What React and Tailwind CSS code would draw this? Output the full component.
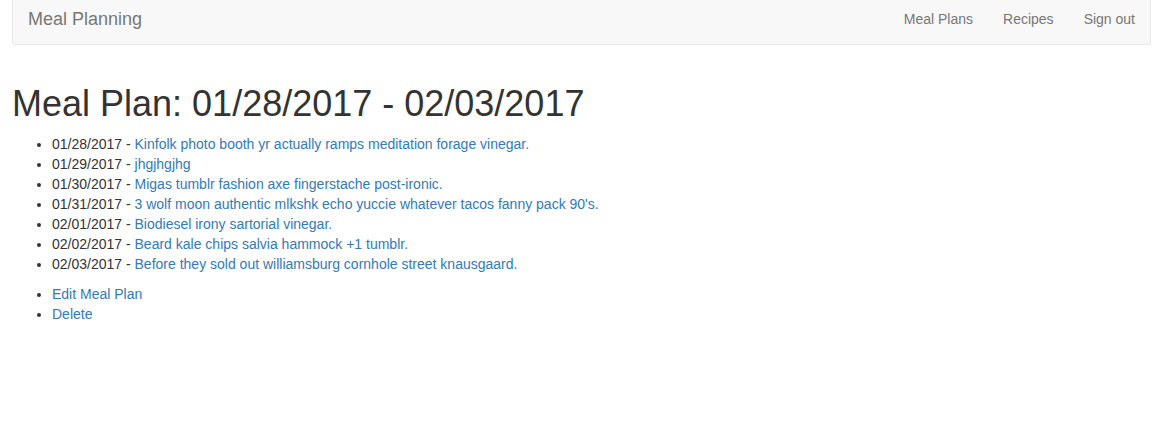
export default function App() {
  const meals = [
    ["01/28/2017", "Kinfolk photo booth yr actually ramps meditation forage vinegar."],
    ["01/29/2017", "jhgjhgjhg"],
    ["01/30/2017", "Migas tumblr fashion axe fingerstache post-ironic."],
    ["01/31/2017", "3 wolf moon authentic mlkshk echo yuccie whatever tacos fanny pack 90's."],
    ["02/01/2017", "Biodiesel irony sartorial vinegar."],
    ["02/02/2017", "Beard kale chips salvia hammock +1 tumblr."],
    ["02/03/2017", "Before they sold out williamsburg cornhole street knausgaard."],
  ];

  return (
    <div className="min-h-[423px] bg-white text-[#333] text-[14px] leading-[20px] font-['Liberation_Sans',Arial,sans-serif]">
      <div className="px-[12px] w-[1163px]">
        {/* Navbar */}
        <nav className="h-[45px] bg-[#f8f8f8] border border-t-0 border-[#e7e7e7] rounded-b-[4px] flex items-start justify-between pt-[9px]">
          <a href="#" className="pl-[15px] text-[18px] leading-[20px] text-[#777]">
            Meal Planning
          </a>
          <ul className="flex">
            <li><a href="#" className="block px-[15px] text-[#777]">Meal Plans</a></li>
            <li><a href="#" className="block px-[15px] text-[#777]">Recipes</a></li>
            <li><a href="#" className="block px-[15px] text-[#777]">Sign out</a></li>
          </ul>
        </nav>

        <h1 className="mt-[39px] mb-[10px] text-[36px] leading-[40px] font-normal">
          Meal Plan: 01/28/2017 - 02/03/2017
        </h1>

        <ul className="list-disc pl-[40px] mb-[10px]">
          {meals.map(([date, name]) => (
            <li key={date}>
              {date} - <a href="#" className="text-[#337ab7]">{name}</a>
            </li>
          ))}
        </ul>

        <ul className="list-disc pl-[40px]">
          <li><a href="#" className="text-[#337ab7]">Edit Meal Plan</a></li>
          <li><a href="#" className="text-[#337ab7]">Delete</a></li>
        </ul>
      </div>
    </div>
  );
}
